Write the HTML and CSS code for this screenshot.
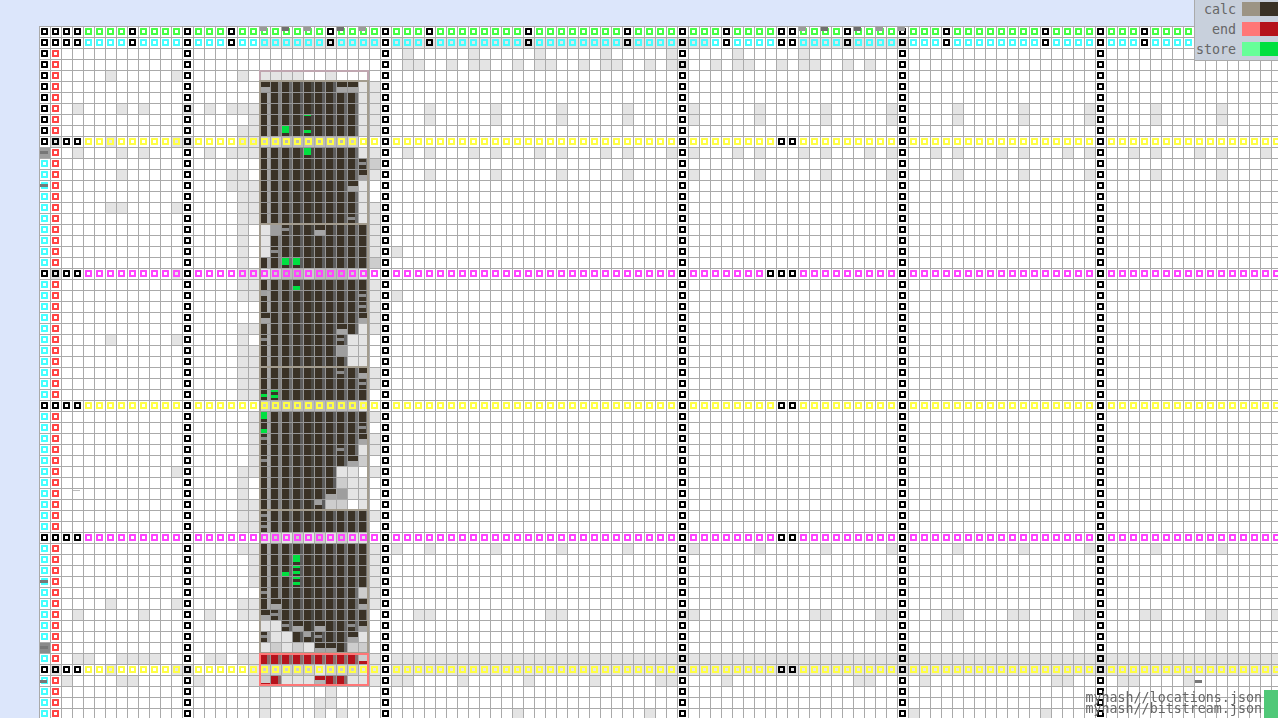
FILE: index.html
```html
<!DOCTYPE html>
<html lang="en">
<head>
<meta charset="utf-8">
<title>Pipeline timeline</title>
<link rel="stylesheet" href="styles.css">
</head>
<body>
<main class="board" id="board">
  <div class="cells" id="cells"></div>
  <div class="regions" id="regions"></div>
</main>
<aside class="legend">
  <span class="legend-name">calc</span><i class="sw calc-a"></i><i class="sw calc-b"></i>
  <span class="legend-name">end</span><i class="sw end-a"></i><i class="sw end-b"></i>
  <span class="legend-name">store</span><i class="sw store-a"></i><i class="sw store-b"></i>
</aside>
<footer class="files">
  <div class="file-names">
    <div>myhash//locations.json</div>
    <div>myhash//bitstream.json</div>
  </div>
  <div class="file-status"></div>
</footer>
<script src="app.js"></script>
</body>
</html>
```
FILE: styles.css
```css
html, body {
  margin: 0;
  height: 718px;
  overflow: hidden;
  background: #dce6fb;
}
body {
  padding: 26px 0 0 39px;
  box-sizing: border-box;
  font-family: "DejaVu Sans Mono", monospace;
  font-size: 13.33px;
  color: #666;
}
.board {
  position: relative;
  width: 1243px;
  height: 693px;
}
.cells, .regions {
  display: grid;
  grid-template-columns: repeat(113, 11px);
  grid-auto-rows: 11px;
}
.regions {
  position: absolute;
  inset: 0;
  pointer-events: none;
}
.cell {
  position: relative;
  box-sizing: border-box;
  border-left: 1px solid #aaa;
  border-top: 1px solid #aaa;
  background: #fff;
}
.s0 { --strip: #a8a8a8; --w: 3px; }
.s1 { --strip: #858585; --w: 3px; }
.s2 { --strip: #6c6c6c; --w: 3px; }
.s3 { --strip: #5e5e5e; --w: 3px; }
.s4 { --strip: #4b4a45; --w: 3px; }
.s5 { --strip: #5e5e5e; --w: 3px; }
.s6 { --strip: #5e5e5e; --w: 3px; }
.s7 { --strip: #696969; --w: 3px; }
.s8 { --strip: #707070; --w: 3px; }
.s9 { --strip: #707070; --w: 3px; }

.k-l { background: #e4e4e4; }
.k-m { background: #cdcdcd; }
.k-i { background: #bbb; }
.k-g { background: #9e9e9e; }
.k-G { background: #8a8a8a; }

.k-D, .k-t, .k-h, .k-b, .k-f, .k-e, .k-c, .k-o, .k-d, .k-R {
  border-color: #959595;
  box-shadow: inset calc(-1 * var(--w)) 0 0 var(--strip);
}
.k-D { background: #3a3226; }
.k-t { background: linear-gradient(#3a3226 0 5px, #a6a6a6 5px); box-shadow: none; }
.k-h { background: linear-gradient(#3a3226 0 3px, #8c8c8c 3px 6px, #3a3226 6px); }
.k-b { background: linear-gradient(#a0a0a0 0 5px, #3a3226 5px); }
.k-f { background: linear-gradient(#00e040 0 7px, #3a3226 7px); }
.k-e { background: linear-gradient(#3a3226 0 6px, #00e040 6px); }
.k-c { background: linear-gradient(#00e040 0 1px, #3a3226 1px); }
.k-o { background: linear-gradient(#3a3226 0 4px, #00e040 4px 7px, #3a3226 7px); }
.k-d { background: linear-gradient(#00e040 0 2px, #3a3226 2px 5px, #00e040 5px 8px, #3a3226 8px); }
.k-R { background: #b5121b; --strip: #8c6e6e; }
.k-r { background: linear-gradient(#cdcdcd 0 7px, #b5121b 7px); }
.k-u { background: linear-gradient(#b5121b 0 4px, #b4b4b4 4px); }

.mark {
  box-sizing: border-box;
  width: 7px;
  height: 7px;
  margin: 1px;
  border: 2px solid #000;
  border-radius: 0.5px;
}
.green { border-color: #44ff44; }
.cyan { border-color: #44ffff; }
.red { border-color: #ff4444; }
.yellow { border-color: #ffff44; }
.magenta { border-color: #ff44ff; }
.black { border-color: #000; }

.band {
  position: absolute;
  left: 0;
  width: 7px;
  background: #777;
}
.band-top { top: 0; height: 4px; background: #999; }
.band-top-dark { top: 0; height: 4px; background: #6f6f6f; }
.band-mid { top: 3px; height: 3px; width: 8px; }
.band-low { top: 4px; height: 3px; }
.band-thin { top: 1px; height: 1px; background: #bbb; }

.region {
  box-sizing: border-box;
  border: 2px solid #a39c8e;
}
.region-calc { margin: -1px 0 -1px 0; }
.region-first { border-color: #c0a6b0; margin-bottom: -1px; }
.region-end { border-color: #ff7777; }

.legend {
  position: fixed;
  top: 0;
  right: 0;
  width: 84px;
  height: 61px;
  box-sizing: border-box;
  padding-top: 2px;
  display: grid;
  grid-template-columns: 1fr 18px 18px;
  grid-auto-rows: 14px;
  row-gap: 6px;
  background: #c8d0dc;
  border-left: 1px solid #aaa;
  border-bottom: 1px solid #aaa;
  line-height: 16px;
}
.legend-name { text-align: right; padding-right: 6px; }
.sw { display: block; }
.calc-a { background: #9c9484; }
.calc-b { background: #3a3226; }
.end-a { background: #ff7777; }
.end-b { background: #b5121b; }
.store-a { background: #66ff99; }
.store-b { background: #00e040; }

.files {
  position: fixed;
  right: 0;
  bottom: 0;
  display: flex;
  align-items: flex-end;
  gap: 2px;
}
.file-names {
  line-height: 11px;
  text-align: right;
  padding-bottom: 4px;
}
.file-status {
  width: 14px;
  height: 28px;
  background: #50c878;
}
```
FILE: app.js
```js
const COLS = 113;
const ROWS = 63;
const SPINE = [13, 31, 58, 78, 96];
const TOP_BLACK = [0, 1, 2, 3, 8, 13, 17, 26, 31, 35, 44, 53, 58, 62, 67, 68, 73, 78, 82, 91, 96, 100];
const YELLOW_ROWS = [10, 34, 58];
const MAGENTA_ROWS = [22, 46];

/* Occupancy of the ten busy columns (20-29), by row. */
const BUSY = {
  4: 'llll..l...', 5: 'tDDDDDDttl', 6: 'DDDDDDDDDl', 7: 'DDDDDDDDDl', 8: 'DDDDcDDDDl',
  9: 'DDfDoDDDDl', 10: 'mmiiiiiim.', 11: 'DDDDfDDDDl', 12: 'DDDDDDDDDh', 13: 'DDDDDDDDDt',
  14: 'DDDDDDDDtl', 15: 'DDDDDDDDDl', 16: 'DDDDDDDDDl', 17: 'DDDDDDDDhl', 18: 'lghDDtDDDD',
  19: 'lDDDDDDDDD', 20: 'lhDDDDDDDD', 21: 'DDffDDDDDD', 22: 'lmiimiiiml', 23: 'DDDeDDDDDD',
  24: 'bDDDDDDDDh', 25: 'DDDDDDDDDh', 26: 'tDDDDDDDDt', 27: 'DDDDDDDtDl', 28: 'hDDDDDDhll',
  29: 'DDDDDDDgll', 30: 'DDDDDDDDll', 31: 'DDDDDDDhDt', 32: 'DDDDDDDDDh', 33: 'odDDDDDDDD',
  34: 'miiiiiiiil', 35: 'fDDDDDDDDD', 36: 'eDDDDDDDDh', 37: 'hDDDDDDDDt', 38: 'DDDDDDDhDl',
  39: 'hDDDDDDDtm', 40: 'DDDDDDDll.', 41: 'DDDDDDDmll', 42: 'DDDDDDtgll', 43: 'DDDDDbmm.l',
  44: 'hDDDDDDDDD', 45: 'hDDDDDDDDD', 46: 'lmlmlmlmll', 47: 'DDDDDDDDDD', 48: 'DDDfDDDDDD',
  49: 'DDedDDDDDD', 50: 'DDDdDDDDDD', 51: 'hDDDDDDDDm', 52: 'DtDDDDDDDt',
  53: 'thDDDDDDDD', 54: 'llhtDtDDht', 55: 'hllDbhDDtl', 56: 'lmlmlttDmm', 57: 'RRRRRRRRRr',
  58: 'mmmmmlmmml', 59: 'rRllluRRll', 60: 'l.....l...', 61: 'l....ll...', 62: 'l....l.l..'
};

/* Light cells left of the busy columns, by row. */
const LEFT = {
  4: [6, 12, 18], 7: [3, 7, 9, 13, 15, 17, 18, 19], 8: [19], 9: [18, 19], 10: [1, 6, 12, 13, 18, 19],
  11: [3, 7, 9, 15, 17, 18, 19], 13: [7, 17, 18], 14: [17, 18, 19], 15: [18, 19], 16: [6, 7, 12, 18, 19],
  17: [18, 19], 18: [18], 19: [18], 20: [18], 21: [18], 22: [1, 12, 18, 19], 23: [18, 19], 24: [18, 19],
  27: [18, 19], 28: [6, 12, 18], 29: [18, 19], 30: [18, 19], 31: [18, 19], 32: [18, 19], 33: [18, 19],
  35: [19], 36: [19], 37: [19], 38: [19], 39: [19], 40: [12, 18, 19], 41: [18], 42: [18], 43: [18, 19],
  44: [18, 19], 45: [18, 19], 47: [18, 19], 48: [19], 49: [19], 50: [19], 52: [6, 12, 18, 19],
  53: [3, 9, 15, 18, 19], 57: [3, 4, 7, 8, 9, 10, 15, 16, 18, 19], 58: [1, 6, 12, 13, 19],
  59: [2, 7, 8, 14, 19]
};

/* Light cells in the column just right of the busy columns. */
const AFTER = [5, 6, 7, 8, 9, 11, 12, 13, 16, 17, 18, 19, 20, 21, 23, 24, 25, 26, 27, 31, 32,
  35, 37, 38, 40, 44, 47, 48, 49, 50, 51, 52, 57, 58, 59];
const AFTER_MID = [12, 21];

const ROW59 = [32, 33, 38, 44, 50, 56, 57, 62, 74, 75, 80, 92, 93, 98, 99, 104];
const ROW62 = [43, 55, 79, 91];

/* Small overlays: [row, column, kind]. */
const BANDS = [
  [0, 20, 'band-top'], [0, 22, 'band-top-dark'], [0, 24, 'band-top'], [0, 27, 'band-top-dark'],
  [0, 29, 'band-top'], [0, 69, 'band-top'], [0, 71, 'band-top-dark'], [0, 74, 'band-top-dark'],
  [0, 76, 'band-top'], [0, 78, 'band-top'],
  [11, 0, 'band-mid'], [14, 0, 'band-mid'], [50, 0, 'band-mid'], [56, 0, 'band-mid'],
  [59, 0, 'band-low'], [42, 3, 'band-thin'], [59, 105, 'band-low']
];
const COVERED = { '11,0': 'k-g', '56,0': 'k-G' };

function lightOnRight(r, c) {
  const m = c % 6;
  if (c < 32) return false;
  if (r === 1) return c <= 60 || (c >= 69 && c <= 78);
  if (r === 2) return m === 3 && c <= 69;
  if (r === 3) return (m === 3 || m === 4 || m === 1) && c <= 75;
  if (r === 7 || r === 8 || r === 13) return m === 5;
  if (r === 11) return m === 3 || m === 5;
  if (r === 20 || r === 24) return c === 32;
  if (r === 47) return m === 5 || c === 32;
  if (r === 53) return c < 66 ? c % 12 >= 10 : m >= 4;
  if (r === 57 || r === 58) return true;
  if (r === 59) return ROW59.includes(c);
  if (r === 62) return ROW62.includes(c);
  return false;
}

function fillClass(r, c) {
  if (COVERED[r + ',' + c]) return COVERED[r + ',' + c];
  if (c >= 20 && c <= 29) {
    if (BUSY[r]) {
      const k = BUSY[r][c - 20];
      return k === '.' ? '' : 'k-' + k + ' s' + (c - 20);
    }
    return r === 1 ? 'k-l' : '';
  }
  if (c === 30) {
    if (AFTER_MID.includes(r)) return 'k-m';
    if (AFTER.includes(r) || r === 1) return 'k-l';
    return '';
  }
  if (c < 20 && (LEFT[r] || []).includes(c)) return 'k-l';
  return lightOnRight(r, c) ? 'k-l' : '';
}

function markClass(r, c) {
  if (COVERED[r + ',' + c]) return '';
  if (r < 2) {
    if (TOP_BLACK.includes(c)) return 'black';
    return r === 0 ? 'green' : 'cyan';
  }
  const yellow = YELLOW_ROWS.includes(r);
  const magenta = MAGENTA_ROWS.includes(r);
  if (yellow || magenta) {
    if (c <= 3 || SPINE.includes(c) || c === 67 || c === 68 || (r === 22 && c === 66)) return 'black';
    return yellow ? 'yellow' : 'magenta';
  }
  if (c === 0) return r < 10 ? 'black' : 'cyan';
  if (c === 1) return 'red';
  return SPINE.includes(c) ? 'black' : '';
}

function buildCells() {
  const host = document.getElementById('cells');
  const frag = document.createDocumentFragment();
  const bandAt = new Map(BANDS.map(([r, c, kind]) => [r + ',' + c, kind]));
  for (let r = 0; r < ROWS; r++) {
    for (let c = 0; c < COLS; c++) {
      const cell = document.createElement('div');
      cell.className = ('cell ' + fillClass(r, c)).trim();
      const mark = markClass(r, c);
      if (mark) {
        const m = document.createElement('div');
        m.className = 'mark ' + mark;
        cell.appendChild(m);
      }
      const band = bandAt.get(r + ',' + c);
      if (band) {
        const b = document.createElement('div');
        b.className = 'band ' + band;
        cell.appendChild(b);
      }
      frag.appendChild(cell);
    }
  }
  host.appendChild(frag);
}

function buildRegions() {
  const host = document.getElementById('regions');
  const regions = [
    [5, 1, 'region-first'], [6, 13, 'region-calc'], [19, 13, 'region-calc'],
    [32, 13, 'region-calc'], [45, 13, 'region-calc'], [58, 3, 'region-end']
  ];
  for (const [row, span, kind] of regions) {
    const el = document.createElement('div');
    el.className = 'region ' + kind;
    el.style.gridColumn = '21 / span 10';
    el.style.gridRow = row + ' / span ' + span;
    host.appendChild(el);
  }
}

buildCells();
buildRegions();
```
